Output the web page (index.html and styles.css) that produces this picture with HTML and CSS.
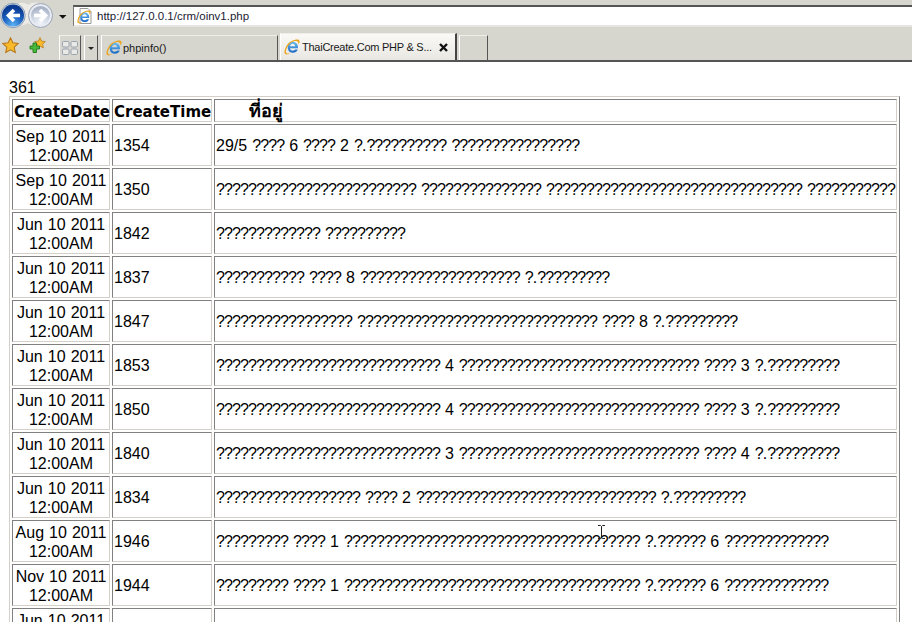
FILE: index.html
```html
<!DOCTYPE html>
<html lang="th">
<head>
<meta charset="utf-8">
<title>oinv1</title>
<link rel="stylesheet" href="styles.css">
</head>
<body>
<svg class="defs" width="0" height="0" aria-hidden="true">
  <defs>
    <linearGradient id="ieblue" x1="0" y1="0" x2="0" y2="1"><stop offset="0" stop-color="#6fc0f2"/><stop offset="1" stop-color="#1565c4"/></linearGradient>
    <radialGradient id="backfill" cx=".5" cy=".95" r=".8"><stop offset="0" stop-color="#5fb4f2"/><stop offset=".55" stop-color="#1f66c4"/><stop offset="1" stop-color="#0b3a92"/></radialGradient>
    <radialGradient id="fwdfill" cx=".5" cy=".9" r=".8"><stop offset="0" stop-color="#f2f5fa"/><stop offset=".6" stop-color="#cdd5e2"/><stop offset="1" stop-color="#a9b3c6"/></radialGradient>
    <symbol id="ie" viewBox="0 0 16 16">
      <path d="M8.500 2.500a5.500 5.500 0 0 1 5.500 5.700v1H6c.2 1.700 1.300 2.500 2.700 2.500 1 0 1.900-.4 2.400-1.200h2.700c-.8 2.200-2.800 3.300-5.100 3.300a5.700 5.700 0 0 1-.2-11.300zM6 7.300h5.300C11.100 5.800 10 4.800 8.600 4.800S6.200 5.800 6 7.300z" fill="url(#ieblue)"/>
      <path d="M4 4.700C6 2.500 11.500-.3 14.600.7c1.500.6 1.200 3-.2 4.800.1-1.800-.5-3.300-2.200-3.400C8.800 2 5 4.700 3 8.700 1.500 11.800 1.500 14 3 14.400c1.300.3 3-.5 4-1.300-2.300 2.300-5.800 3.400-6.500 1C0 11.700 2 7 4 4.700z" fill="#eaa51f"/>
    </symbol>
    <symbol id="star" viewBox="0 0 16 16">
      <path d="M8 .8l2.200 4.700 5 .6-3.700 3.400 1 5.100L8 12.100l-4.500 2.500 1-5.100L.8 6.100l5-.6z" fill="#f8b92b" stroke="#b9791a"/>
    </symbol>
  </defs>
</svg>

<header class="chrome">
  <div class="nav-row">
    <div class="nav-buttons">
      <svg class="nav-svg" viewBox="0 0 73 29" width="73" height="29">
        <path d="M14 6c6-4 10-4 14-1 5-3 9-3 14-1v20c-5 2-9 2-14-1-4 3-8 3-14 1z" fill="#eceBe6"/>
        <circle cx="40.500" cy="15.500" r="12" fill="#e9ecf2" stroke="#9aa5b8"/>
        <circle cx="40.500" cy="15.500" r="9.500" fill="url(#fwdfill)"/>
        <path d="M34 15.500h11m-5-5.500l5.500 5.500-5.500 5.500" fill="none" stroke="#fff" stroke-width="3.600"/>
        <circle cx="13" cy="15.500" r="12.200" fill="#d4dce8" stroke="#8e9db4"/>
        <circle cx="13" cy="15.500" r="11" fill="url(#backfill)"/>
        <path d="M20 15.500H8.500m5.500-5.500l-5.500 5.500 5.500 5.500" fill="none" stroke="#fff" stroke-width="3.600"/>
        <path d="M59 15h7.500l-3.750 3.750z" fill="#111"/>
      </svg>
    </div>
    <div class="address-bar">
      <svg class="page-icon" width="16" height="16" viewBox="0 0 16 16"><path d="M3 .5h8l3 3v12H3z" fill="#fff" stroke="#9a9a9a"/><use href="#ie" x="0" y="2" width="14" height="14"/></svg>
      <span class="url">http://127.0.0.1/crm/oinv1.php</span>
    </div>
  </div>
  <div class="tab-row">
    <div class="fav-icons">
      <svg class="fav-star" width="17" height="17"><use href="#star" width="17" height="17"/></svg>
      <svg class="fav-add" width="17" height="17"><use href="#star" x="5" y="0" width="12" height="12"/><path d="M1 9h3V6h3.500v3h3v3h-3v3.500H4V12H1z" fill="#48b83a" stroke="#217a1c" stroke-width=".9"/></svg>
    </div>
    <div class="quick-btn">
      <svg width="16" height="14" viewBox="0 0 16 14"><g fill="#e9e9e6" stroke="#98a2ae"><rect x=".5" y=".5" width="6.500" height="5.500" rx="1.200"/><rect x="9" y=".5" width="6.500" height="5.500" rx="1.200"/><rect x=".5" y="8" width="6.500" height="5.500" rx="1.200"/><rect x="9" y="8" width="6.500" height="5.500" rx="1.200"/></g></svg>
    </div>
    <div class="quick-menu"><span class="caret"></span></div>
    <div class="tab tab-idle">
      <svg width="16" height="16"><use href="#ie" width="16" height="16"/></svg>
      <span>phpinfo()</span>
    </div>
    <div class="tab tab-active">
      <svg width="16" height="16"><use href="#ie" width="16" height="16"/></svg>
      <span class="tab-title">ThaiCreate.Com PHP &amp; S...</span>
      <svg class="tab-close" width="9" height="9" viewBox="0 0 9 9"><path d="M1 1l7 7M8 1L1 8" stroke="#111" stroke-width="2.400"/></svg>
    </div>
    <div class="tab tab-new"></div>
  </div>
</header>

<main class="content">
  <div class="count">361</div>
  <table class="data">
    <colgroup><col class="c1"><col class="c2"><col class="c3"></colgroup>
    <thead>
      <tr><th>CreateDate</th><th>CreateTime</th><th class="addr-head"><span class="thai">ที่อยู่</span></th></tr>
    </thead>
    <tbody>
      <tr><td class="date">Sep 10 2011 12:00AM</td><td>1354</td><td class="addr">29/5 <i>????</i> 6 <i>????</i> 2 <i>?</i>.<i>??????????</i> <i>????????????????</i></td></tr>
      <tr><td class="date">Sep 10 2011 12:00AM</td><td>1350</td><td class="addr"><i>?????????????????????????</i> <i>???????????????</i> <i>????????????????????????????????</i> <i>???????????</i></td></tr>
      <tr><td class="date">Jun 10 2011 12:00AM</td><td>1842</td><td class="addr"><i>?????????????</i> <i>??????????</i></td></tr>
      <tr><td class="date">Jun 10 2011 12:00AM</td><td>1837</td><td class="addr"><i>???????????</i> <i>????</i> 8 <i>????????????????????</i> <i>?</i>.<i>?????????</i></td></tr>
      <tr><td class="date">Jun 10 2011 12:00AM</td><td>1847</td><td class="addr"><i>?????????????????</i> <i>??????????????????????????????</i> <i>????</i> 8 <i>?</i>.<i>?????????</i></td></tr>
      <tr><td class="date">Jun 10 2011 12:00AM</td><td>1853</td><td class="addr"><i>????????????????????????????</i> 4 <i>??????????????????????????????</i> <i>????</i> 3 <i>?</i>.<i>?????????</i></td></tr>
      <tr><td class="date">Jun 10 2011 12:00AM</td><td>1850</td><td class="addr"><i>????????????????????????????</i> 4 <i>??????????????????????????????</i> <i>????</i> 3 <i>?</i>.<i>?????????</i></td></tr>
      <tr><td class="date">Jun 10 2011 12:00AM</td><td>1840</td><td class="addr"><i>????????????????????????????</i> 3 <i>??????????????????????????????</i> <i>????</i> 4 <i>?</i>.<i>?????????</i></td></tr>
      <tr><td class="date">Jun 10 2011 12:00AM</td><td>1834</td><td class="addr"><i>??????????????????</i> <i>????</i> 2 <i>??????????????????????????????</i> <i>?</i>.<i>?????????</i></td></tr>
      <tr><td class="date">Aug 10 2011 12:00AM</td><td>1946</td><td class="addr"><i>?????????</i> <i>????</i> 1 <i>?????????????????????????????????????</i> <i>?</i>.<i>??????</i> 6 <i>?????????????</i></td></tr>
      <tr><td class="date">Nov 10 2011 12:00AM</td><td>1944</td><td class="addr"><i>?????????</i> <i>????</i> 1 <i>?????????????????????????????????????</i> <i>?</i>.<i>??????</i> 6 <i>?????????????</i></td></tr>
      <tr><td class="date">Jun 10 2011 12:00AM</td><td></td><td></td></tr>
    </tbody>
  </table>
</main>
<svg class="ibeam" width="7" height="14" viewBox="0 0 7 14"><path d="M0 .5h2.500L3.500 1.500 4.500.5H7M3.500 1.500v11M0 13.500h2.500l1-1 1 1H7" fill="none" stroke="#222"/></svg>
</body>
</html>
```
FILE: styles.css
```css
html, body { margin: 0; height: 622px; overflow: hidden; background: #fff; }
body { position: relative; font-family: "Liberation Sans", Arial, sans-serif; color: #000; }
.defs { position: absolute; }

.chrome { background: #d6d5ce; height: 62px; box-sizing: border-box; border-bottom: 2px solid #555; font-size: 11px; }
.nav-row { display: flex; height: 27px; }
.nav-buttons { width: 73px; flex: none; }
.nav-svg { display: block; }
.address-bar { flex: 1; margin-top: 5px; background: #fff; border-top: 2px solid #555; border-left: 1px solid #777; border-bottom: 2px solid #e6e5e0; display: flex; align-items: center; padding-left: 3px; gap: 4px; box-sizing: border-box; }
.page-icon { flex: none; }
.url { font-size: 11.5px; color: #1a1a33; }

.tab-row { display: flex; height: 33px; box-sizing: border-box; padding-top: 10px; }
.fav-icons { width: 59px; flex: none; display: flex; gap: 10px; padding-left: 2px; box-sizing: border-box; }
.fav-icons svg { display: block; }
.quick-btn { width: 22px; height: 25px; margin: -2px 3px 0 0; flex: none; border-left: 1px solid #fff; border-top: 1px solid #f0efea; border-right: 1px solid #555; box-sizing: border-box; display: flex; align-items: center; justify-content: center; }
.quick-menu { width: 14px; height: 25px; margin: -2px 3px 0 0; flex: none; border-left: 1px solid #fff; border-top: 1px solid #f0efea; border-right: 1px solid #555; box-sizing: border-box; display: flex; align-items: center; justify-content: center; }
.caret { width: 0; height: 0; border-left: 3px solid transparent; border-right: 3px solid transparent; border-top: 3px solid #222; }

.tab { box-sizing: border-box; display: flex; align-items: center; height: 25px; margin-top: -2px; border-top: 1px solid #efeee9; border-left: 1px solid #fff; border-right: 1px solid #555; color: #1a1a1a; flex: none; }
.tab-idle { width: 177px; padding-left: 4px; gap: 1px; margin-right: 2px; font-size: 11px; background: #d6d5ce; }
.tab-active { width: 177px; height: 27px; margin-top: -4px; margin-right: 2px; padding-left: 3px; gap: 2px; background: linear-gradient(#faf9f6, #e8e7e2); border-right: 2px solid #444; font-size: 11px; }
.tab-title { flex: 1; white-space: nowrap; letter-spacing: -.25px; }
.tab-close { margin-right: 7px; }
.tab-new { width: 29px; }

.content { padding: 17px 0 0 9px; }
.count { font-size: 16px; line-height: 18px; height: 17px; }
.data { width: 891px; table-layout: fixed; border-collapse: separate; border-spacing: 2px; border: 1px solid; border-color: #d4d0c8 #808080 #808080 #d4d0c8; font-size: 16px; line-height: 19px; }
.c1 { width: 98px; }
.c2 { width: 100px; }
.data th, .data td { border: 1px solid; border-color: #808080 #d4d0c8 #d4d0c8 #808080; padding: 1px; white-space: nowrap; overflow: visible; }
.data th { font-family: "DejaVu Sans", sans-serif; font-weight: bold; font-size: 15px; line-height: 17px; text-align: center; padding: 4px 1px 0; height: 17px; }
.data th.addr-head { text-align: left; padding-left: 34px; }
.thai { font-size: 18px; line-height: 0; }
.data td.date { white-space: normal; text-align: center; padding: 2px 1px 0; word-spacing: .6px; }
.addr { word-spacing: .55px; }
.addr i { font-style: normal; letter-spacing: -.9px; }

.ibeam { position: absolute; left: 598px; top: 525px; }
```
